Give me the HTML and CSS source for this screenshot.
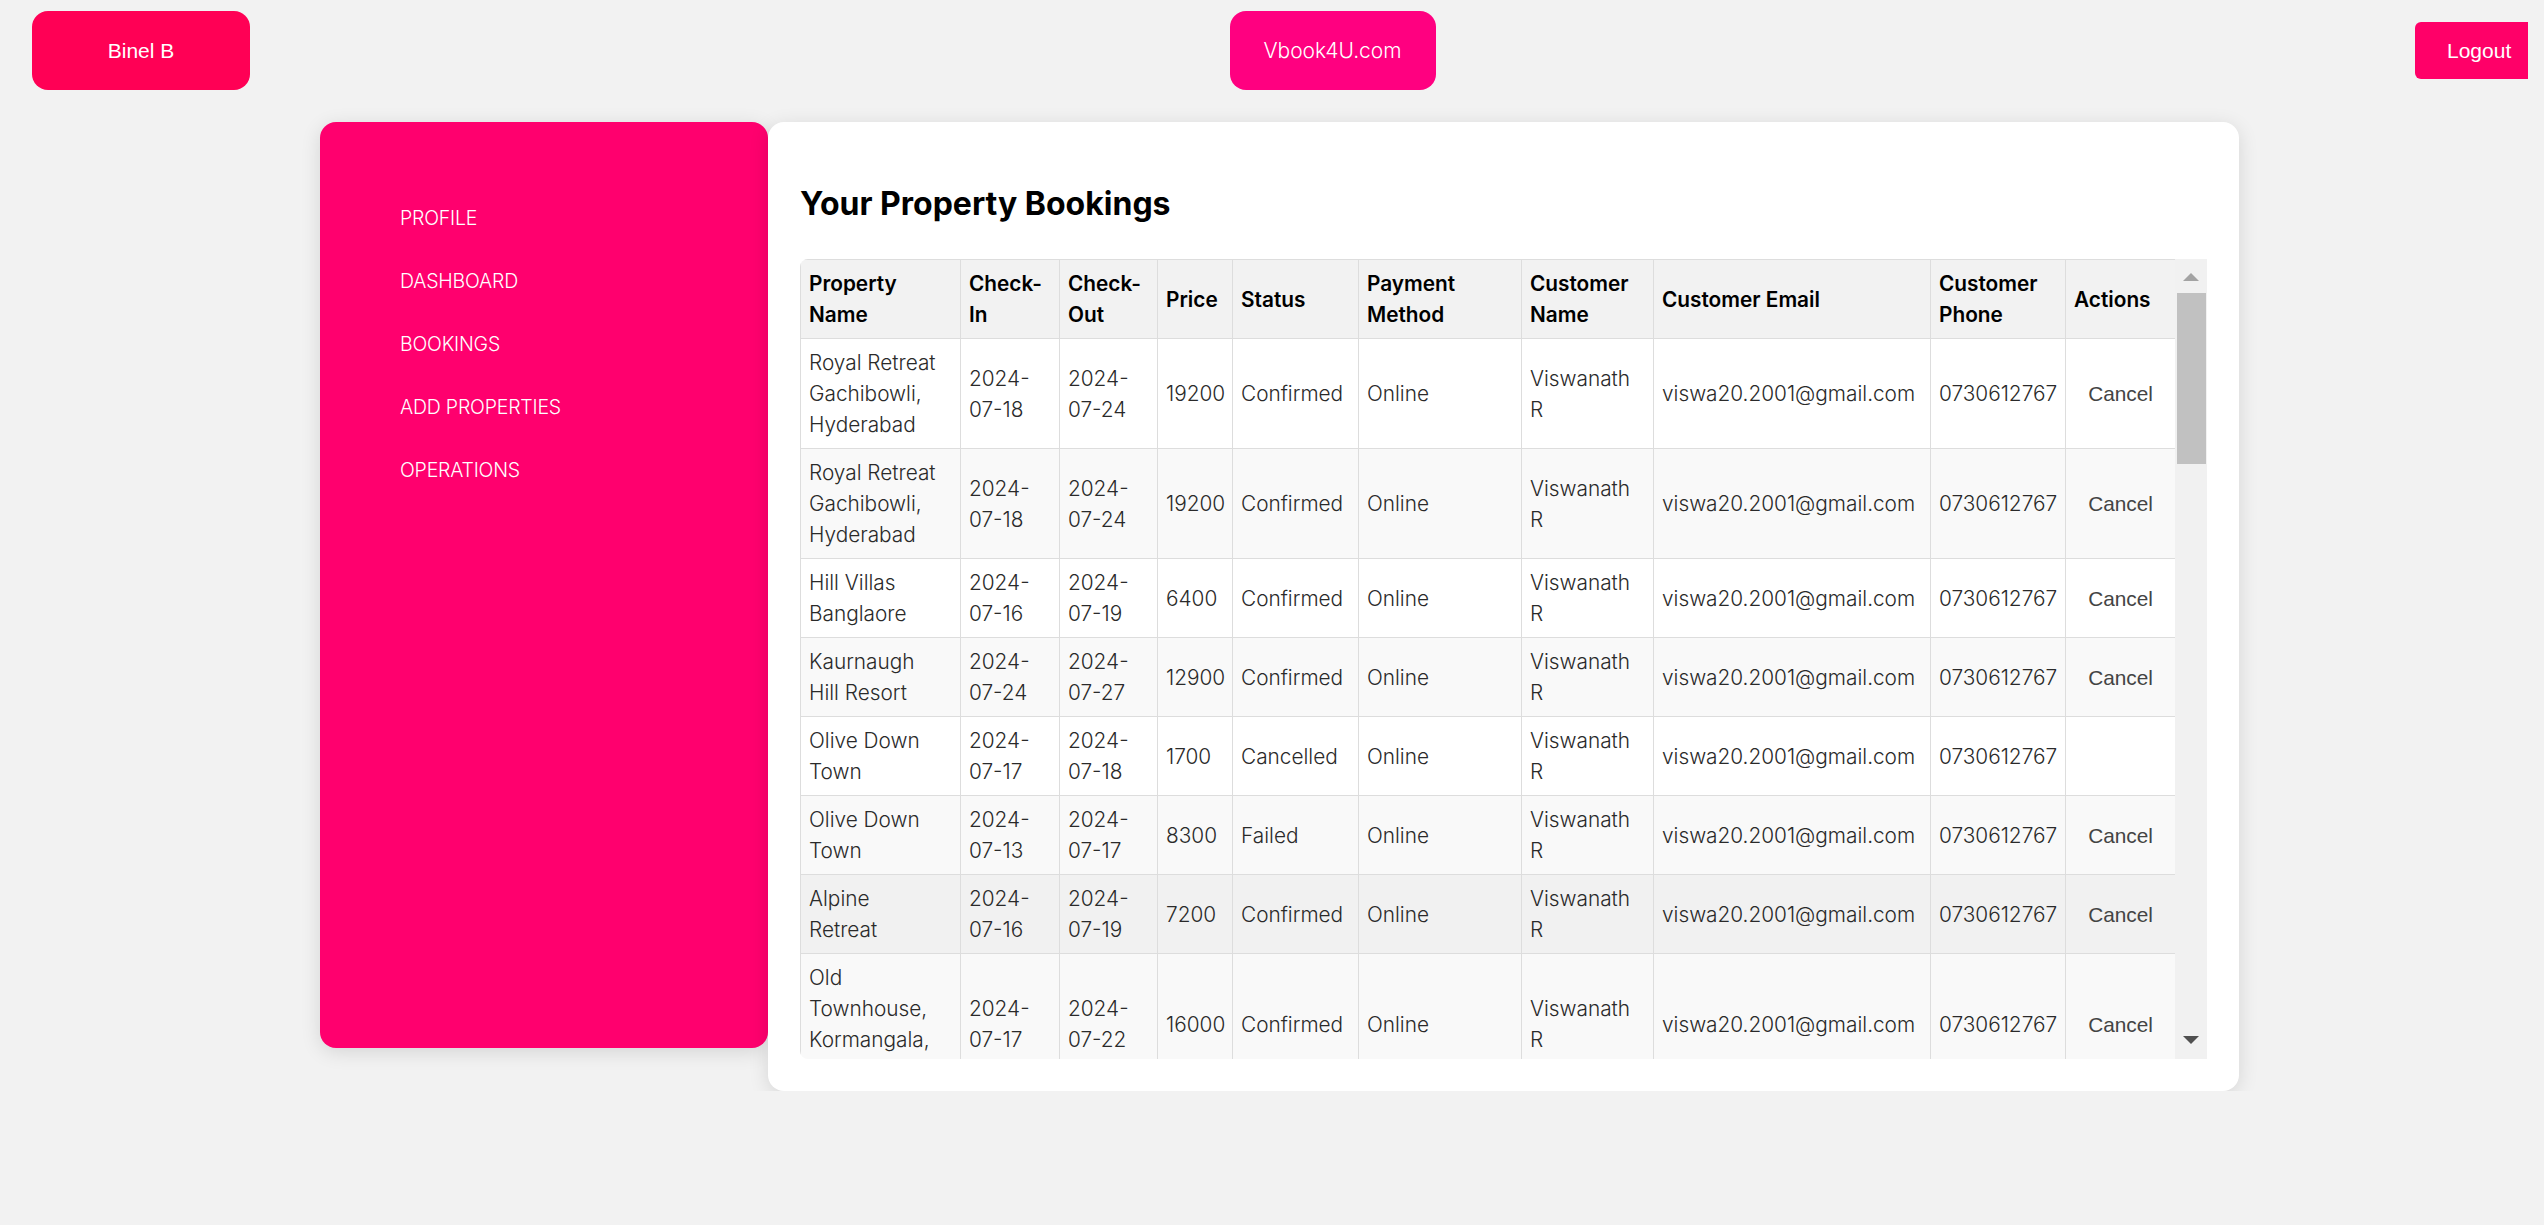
FILE: index.html
```html
<!DOCTYPE html>
<html lang="en">
<head>
<meta charset="utf-8">
<title>Your Property Bookings - Vbook4U</title>
<link rel="stylesheet" href="styles.css">
</head>
<body>
<header class="topbar">
  <div class="user-badge">Binel B</div>
  <div class="brand">Vbook4U.com</div>
  <button class="logout">Logout</button>
</header>

<main class="layout">
  <aside class="sidebar">
    <ul class="nav">
      <li class="nav-item">PROFILE</li>
      <li class="nav-item">DASHBOARD</li>
      <li class="nav-item">BOOKINGS</li>
      <li class="nav-item">ADD PROPERTIES</li>
      <li class="nav-item">OPERATIONS</li>
    </ul>
  </aside>

  <section class="card">
    <h2 class="card-title">Your Property Bookings</h2>
    <div class="table-frame">
      <div class="table-scroll">
        <table class="bookings">
          <colgroup>
            <col class="c-name"><col class="c-in"><col class="c-out"><col class="c-price"><col class="c-status">
            <col class="c-pay"><col class="c-cust"><col class="c-email"><col class="c-phone"><col class="c-act">
          </colgroup>
          <thead>
            <tr>
              <th>Property<br>Name</th><th>Check-<br>In</th><th>Check-<br>Out</th><th>Price</th><th>Status</th>
              <th>Payment<br>Method</th><th>Customer<br>Name</th><th>Customer Email</th><th>Customer<br>Phone</th><th>Actions</th>
            </tr>
          </thead>
          <tbody>
            <tr><td>Royal Retreat<br>Gachibowli,<br>Hyderabad</td><td>2024-<br>07-18</td><td>2024-<br>07-24</td><td>19200</td><td>Confirmed</td><td>Online</td><td>Viswanath<br>R</td><td>viswa20.2001@gmail.com</td><td>0730612767</td><td class="act"><button class="cancel">Cancel</button></td></tr>
            <tr><td>Royal Retreat<br>Gachibowli,<br>Hyderabad</td><td>2024-<br>07-18</td><td>2024-<br>07-24</td><td>19200</td><td>Confirmed</td><td>Online</td><td>Viswanath<br>R</td><td>viswa20.2001@gmail.com</td><td>0730612767</td><td class="act"><button class="cancel">Cancel</button></td></tr>
            <tr><td>Hill Villas<br>Banglaore</td><td>2024-<br>07-16</td><td>2024-<br>07-19</td><td>6400</td><td>Confirmed</td><td>Online</td><td>Viswanath<br>R</td><td>viswa20.2001@gmail.com</td><td>0730612767</td><td class="act"><button class="cancel">Cancel</button></td></tr>
            <tr><td>Kaurnaugh<br>Hill Resort</td><td>2024-<br>07-24</td><td>2024-<br>07-27</td><td>12900</td><td>Confirmed</td><td>Online</td><td>Viswanath<br>R</td><td>viswa20.2001@gmail.com</td><td>0730612767</td><td class="act"><button class="cancel">Cancel</button></td></tr>
            <tr><td>Olive Down<br>Town</td><td>2024-<br>07-17</td><td>2024-<br>07-18</td><td>1700</td><td>Cancelled</td><td>Online</td><td>Viswanath<br>R</td><td>viswa20.2001@gmail.com</td><td>0730612767</td><td class="act"></td></tr>
            <tr><td>Olive Down<br>Town</td><td>2024-<br>07-13</td><td>2024-<br>07-17</td><td>8300</td><td>Failed</td><td>Online</td><td>Viswanath<br>R</td><td>viswa20.2001@gmail.com</td><td>0730612767</td><td class="act"><button class="cancel">Cancel</button></td></tr>
            <tr class="is-hover"><td>Alpine<br>Retreat</td><td>2024-<br>07-16</td><td>2024-<br>07-19</td><td>7200</td><td>Confirmed</td><td>Online</td><td>Viswanath<br>R</td><td>viswa20.2001@gmail.com</td><td>0730612767</td><td class="act"><button class="cancel">Cancel</button></td></tr>
            <tr><td>Old<br>Townhouse,<br>Kormangala,<br>Bangalore</td><td>2024-<br>07-17</td><td>2024-<br>07-22</td><td>16000</td><td>Confirmed</td><td>Online</td><td>Viswanath<br>R</td><td>viswa20.2001@gmail.com</td><td>0730612767</td><td class="act"><button class="cancel">Cancel</button></td></tr>
          </tbody>
        </table>
      </div>
      <div class="scrollbar" aria-hidden="true">
        <span class="sb-up"></span>
        <span class="sb-thumb"></span>
        <span class="sb-track"></span>
        <span class="sb-down"></span>
      </div>
    </div>
  </section>
</main>
</body>
</html>
```

FILE: styles.css
```css
html, body {
  margin: 0;
  padding: 0;
}

body {
  background: #f2f2f2;
  font-family: "Inter", "Noto Sans", sans-serif;
  color: #222;
}

/* ---------- Top bar ---------- */
.topbar {
  display: flex;
  justify-content: space-between;
  align-items: center;
  padding: 11px 16px 0 32px;
}

.user-badge {
  width: 218px;
  height: 79px;
  display: flex;
  align-items: center;
  justify-content: center;
  background: #ff0055;
  color: #fff;
  border-radius: 16px;
  font-family: "Liberation Sans", Arial, sans-serif;
  font-size: 21px;
}

.brand {
  width: 206px;
  height: 79px;
  display: flex;
  align-items: center;
  justify-content: center;
  background: #ff0080;
  color: #fff;
  border-radius: 16px;
  font-family: "Inter", sans-serif;
  font-weight: 300;
  font-size: 21px;
}

.logout {
  height: 57px;
  width: 113px;
  padding: 0 16px 0 32px;
  border: none;
  background: #ff0068;
  color: #fff;
  border-radius: 6px 0 0 6px;
  font-family: "Liberation Sans", Arial, sans-serif;
  font-size: 21px;
  text-align: left;
}

/* ---------- Layout ---------- */
.layout {
  display: flex;
  align-items: flex-start;
  margin: 32px 0 0 320px;
}

.sidebar {
  width: 448px;
  height: 926px;
  box-sizing: border-box;
  padding: 79px 0 0 80px;
  background: #ff006e;
  border-radius: 16px;
  box-shadow: 0 4px 20px rgba(0, 0, 0, 0.12);
}

.nav {
  list-style: none;
  margin: 0;
  padding: 0;
}

.nav-item {
  color: #fff;
  font-size: 19.5px;
  font-weight: 300;
  line-height: 34px;
  margin-bottom: 29px;
  letter-spacing: -0.2px;
}

.card {
  width: 1471px;
  box-sizing: border-box;
  padding: 32px;
  background: #fff;
  border-radius: 16px;
  box-shadow: 0 4px 20px rgba(0, 0, 0, 0.12);
}

.card-title {
  margin: 26px 0 31px;
  font-size: 32px;
  line-height: 48px;
  font-weight: 700;
  color: #000;
}

/* ---------- Table ---------- */
.table-frame {
  display: flex;
  height: 800px;
}

.table-scroll {
  flex: 1;
  min-width: 0;
  overflow: hidden;
  border-radius: 8px 0 0 8px;
}

.scrollbar {
  width: 32px;
  flex: none;
  display: flex;
  flex-direction: column;
  align-items: center;
  background: #f1f1f1;
}

.sb-up {
  width: 0;
  height: 0;
  border-left: 8px solid transparent;
  border-right: 8px solid transparent;
  border-bottom: 8px solid #a3a3a3;
  margin: 14px 0 12px;
}

.sb-thumb {
  align-self: stretch;
  height: 171px;
  margin: 0 1px 0 2px;
  background: #c1c1c1;
}

.sb-track {
  flex: 1;
}

.sb-down {
  width: 0;
  height: 0;
  border-left: 8px solid transparent;
  border-right: 8px solid transparent;
  border-top: 8px solid #505050;
  margin: 12px 0 15px;
}

.bookings {
  width: 100%;
  table-layout: fixed;
  border-collapse: collapse;
  font-size: 20.8px;
  line-height: 31px;
}

.c-name { width: 160px; }
.c-in { width: 99px; }
.c-out { width: 98px; }
.c-price { width: 75px; }
.c-status { width: 126px; }
.c-pay { width: 163px; }
.c-cust { width: 132px; }
.c-email { width: 277px; }
.c-phone { width: 135px; }
.c-act { width: 110px; }

.bookings th,
.bookings td {
  border: 1px solid #ddd;
  padding: 8px;
  text-align: left;
  vertical-align: middle;
  white-space: nowrap;
}

.bookings th {
  background: #f2f2f2;
  color: #000;
  font-weight: 600;
}

.bookings td {
  font-weight: 300;
  color: #2a2a2a;
}

.bookings tbody tr:nth-child(even) {
  background: #f9f9f9;
}

.bookings tbody tr.is-hover {
  background: #f1f1f1;
}

.bookings td.act {
  text-align: center;
}

.cancel {
  border: none;
  background: none;
  padding: 0;
  font-family: "Liberation Sans", Arial, sans-serif;
  font-size: 20.8px;
  color: #444;
}
```
